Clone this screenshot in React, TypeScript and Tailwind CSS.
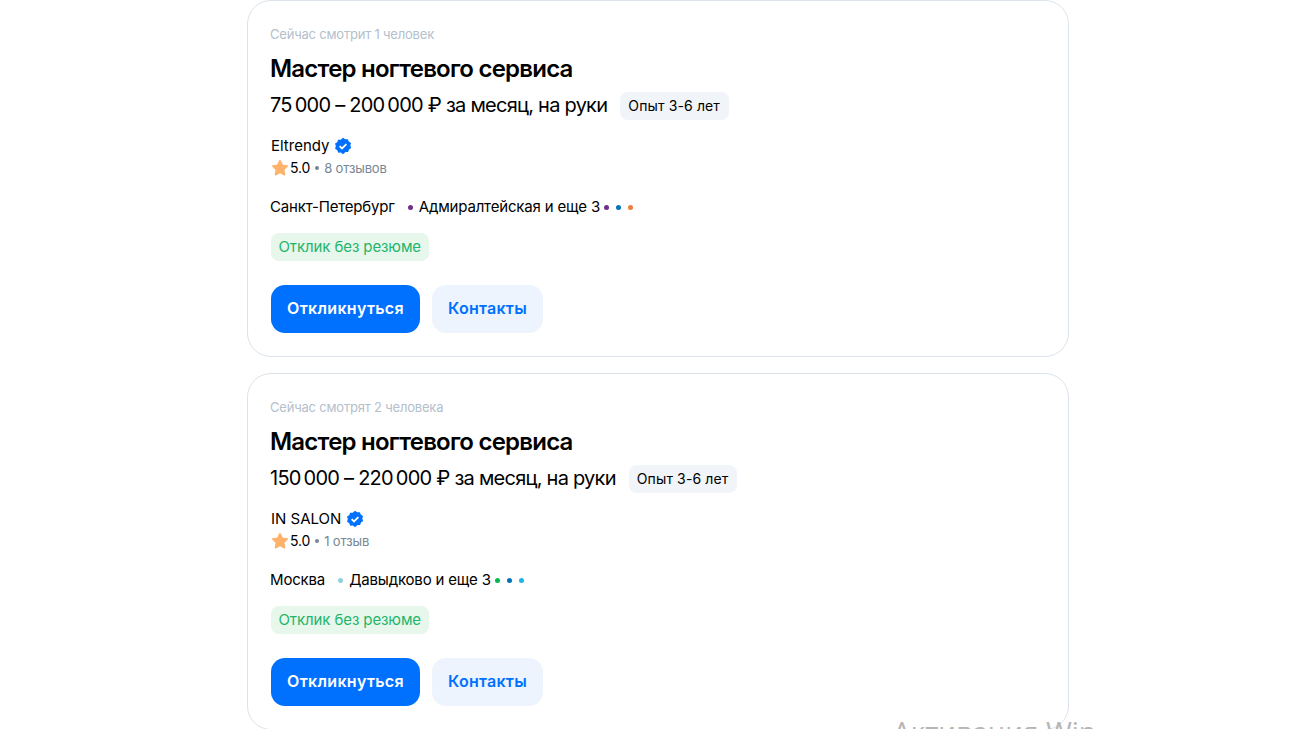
import React from "react";

const Verified = () => (
  <svg width="18" height="18" viewBox="0 0 18 18" className="ml-[4.5px] shrink-0">
    <path
      fill="#0070ff"
      d="M9 .8l2.2 1.5 2.6-.1 1 2.4 2.2 1.4-.7 2.5.9 2.5-2.2 1.5-.9 2.5-2.6 0L9 17.2l-2.1-1.6-2.6.1-1-2.5L1.1 11.7 1.8 9.1 1 6.6l2.2-1.4.9-2.5 2.6 0z"
    />
    <path d="M5.6 9.2l2.4 2.3 4.4-4.4" fill="none" stroke="#fff" strokeWidth="1.8" />
  </svg>
);

const Star = () => (
  <svg width="18" height="18" viewBox="0 0 18 18" className="shrink-0">
    <path
      fill="#ffb26b"
      stroke="#ffb26b"
      strokeWidth="1.6"
      strokeLinejoin="round"
      d="M9 1.6l2.3 4.7 5 .7-3.7 3.6.9 5.1L9 13.3l-4.5 2.4.9-5.1L1.7 7l5-.7z"
    />
  </svg>
);

const Dot = ({ color }: { color: string }) => (
  <span className="block h-[5px] w-[5px] shrink-0 rounded-full" style={{ backgroundColor: color }} />
);

type Vacancy = {
  watching: string;
  salary: string;
  company: string;
  reviews: string;
  city: string;
  metro: string;
  metroDot: string;
  dots: string[];
};

const vacancies: Vacancy[] = [
  {
    watching: "Сейчас смотрит 1 человек",
    salary: "75\u2009000 – 200\u2009000 ₽ за месяц, на руки",
    company: "Eltrendy",
    reviews: "8 отзывов",
    city: "Санкт-Петербург",
    metro: "Адмиралтейская и еще 3",
    metroDot: "#702f8a",
    dots: ["#702f8a", "#0072ba", "#ef7d3c"],
  },
  {
    watching: "Сейчас смотрят 2 человека",
    salary: "150\u2009000 – 220\u2009000 ₽ за месяц, на руки",
    company: "IN SALON",
    reviews: "1 отзыв",
    city: "Москва",
    metro: "Давыдково и еще 3",
    metroDot: "#8fd0dc",
    dots: ["#00b956", "#0072ba", "#1eb5e6"],
  },
];

const VacancyCard = ({ v }: { v: Vacancy }) => (
  <div className="h-[357px] w-[822px] shrink-0 rounded-[24px] border border-[#dce3eb] bg-white px-[23px] pt-[24px]">
    <p className="-ml-px text-[13px] leading-[18px] tracking-[-0.2px] text-[#b4c0cc]">{v.watching}</p>
    <h2 className="mt-[11px] -ml-px text-[24px] font-semibold leading-[30px] tracking-[-0.78px] text-black">
      Мастер ногтевого сервиса
    </h2>
    <div className="mt-[6px] flex h-[30px] items-center">
      <span className="-ml-px text-[20px] leading-[28px] tracking-[-0.75px] text-black">{v.salary}</span>
      <span className="ml-[13px] mt-[2px] rounded-[8px] bg-[#f1f4f9] py-[4px] pl-[8px] pr-[8.5px] text-[14px] leading-[20px] tracking-[0.13px] text-black">
        Опыт 3-6 лет
      </span>
    </div>
    <div className="mt-[16px] flex h-[20px] items-center text-[15px] leading-[20px] text-black">
      {v.company}
      <Verified />
    </div>
    <div className="mt-[2px] flex h-[20px] items-center text-[14px] leading-[20px]">
      <Star />
      <span className="ml-[1px] tracking-[-0.15px] text-black">5.0</span>
      <span className="mx-[5px] h-[4px] w-[4px] rounded-full bg-[#768694]" />
      <span className="text-[13px] tracking-[-0.15px] text-[#768694]">{v.reviews}</span>
    </div>
    <div className="mt-[19px] flex h-[20px] items-center text-[15px] leading-[20px] tracking-[-0.17px] text-black">
      <span className="-ml-px">{v.city}</span>
      <span className="ml-[13px] mr-[6px]">
        <Dot color={v.metroDot} />
      </span>
      <span>{v.metro}</span>
      <span className="ml-[4px] flex items-center gap-[7px]">
        {v.dots.map((c) => (
          <Dot key={c} color={c} />
        ))}
      </span>
    </div>
    <span className="mt-[16px] inline-block rounded-[8px] bg-[#e7f7ec] px-[7.5px] py-[4px] text-[15px] leading-[20px] tracking-[-0.1px] text-[#1fb56a]">
      Отклик без резюме
    </span>
    <div className="mt-[24px] flex gap-[12px]">
      <button className="h-[48px] w-[149px] rounded-[14px] bg-[#0070ff] pb-[2px] text-[16px] font-semibold tracking-[0.3px] text-white">
        Откликнуться
      </button>
      <button className="h-[48px] w-[111px] rounded-[14px] bg-[#edf4fe] pb-[2px] text-[16px] font-semibold tracking-[0.25px] text-[#0070ff]">
        Контакты
      </button>
    </div>
  </div>
);

export default function App() {
  return (
    <div className="relative flex h-[729px] flex-col items-center gap-[16px] overflow-hidden bg-white pl-[20px] font-['Inter','Noto_Sans',sans-serif]">
      {vacancies.map((v) => (
        <VacancyCard key={v.company} v={v} />
      ))}
      <span className="absolute left-[893px] top-[712px] font-['Open_Sans',sans-serif] text-[28px] leading-[38px] text-[#b5b5b5]">
        Активация Win
      </span>
    </div>
  );
}
